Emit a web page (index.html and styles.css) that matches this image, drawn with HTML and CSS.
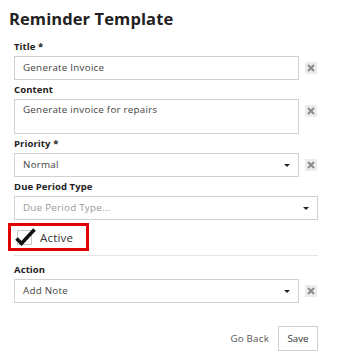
FILE: index.html
```html
<!DOCTYPE html>
<html lang="en">

<head>
  <meta charset="UTF-8" />
  <title>Reminder Template</title>
  <link rel="stylesheet" href="styles.css">
</head>

<body>
  <main class="panel">
    <h1 class="panel-title">Reminder Template</h1>

    <!-- 제목 -->
    <div class="field">
      <label class="field-label">Title *</label>
      <div class="field-row">
        <div class="control">Generate Invoice</div>
        <span class="clear">
          <svg width="8" height="8" viewBox="0 0 8 8"><path d="M1 1L7 7M7 1L1 7" /></svg>
        </span>
      </div>
    </div>

    <!-- 내용 -->
    <div class="field">
      <label class="field-label">Content</label>
      <div class="field-row">
        <div class="control control-area">Generate invoice for repairs</div>
        <span class="clear">
          <svg width="8" height="8" viewBox="0 0 8 8"><path d="M1 1L7 7M7 1L1 7" /></svg>
        </span>
      </div>
    </div>

    <!-- 우선순위 -->
    <div class="field">
      <label class="field-label">Priority *</label>
      <div class="field-row">
        <div class="control control-select">Normal<i class="caret"></i></div>
        <span class="clear">
          <svg width="8" height="8" viewBox="0 0 8 8"><path d="M1 1L7 7M7 1L1 7" /></svg>
        </span>
      </div>
    </div>

    <!-- 기간 -->
    <div class="field">
      <label class="field-label">Due Period Type</label>
      <div class="field-row">
        <div class="control control-select placeholder">Due Period Type...<i class="caret"></i></div>
      </div>
    </div>

    <!-- 활성 체크 -->
    <div class="check-line">
      <label class="check">
        <svg class="check-box" width="23" height="20" viewBox="0 0 23 20">
          <rect x="3.5" y="3.5" width="14" height="14" fill="#fff" stroke="#c8c8c8" />
          <path d="M2.5 11.5L7.5 16.5L20.5 2.5" fill="none" stroke="#111" stroke-width="3.6" />
        </svg>
        <span>Active</span>
      </label>
    </div>

    <!-- 액션 -->
    <div class="field">
      <label class="field-label">Action</label>
      <div class="field-row">
        <div class="control control-select">Add Note<i class="caret"></i></div>
        <span class="clear">
          <svg width="8" height="8" viewBox="0 0 8 8"><path d="M1 1L7 7M7 1L1 7" /></svg>
        </span>
      </div>
    </div>

    <!-- 버튼 -->
    <div class="actions">
      <a href="#" class="back">Go Back</a>
      <button type="button" class="save">Save</button>
    </div>
    <div class="next-btn"></div>
  </main>
</body>

</html>
```

FILE: styles.css
```css
/* 초기화 */
html,
body {
  margin: 0;
  padding: 0;
}

body {
  background-color: #fff;
  font-family: "Open Sans", "Liberation Sans", sans-serif;
  color: #444;
}

/* 패널 */
.panel {
  width: 338px;
  height: 358px;
  overflow: hidden;
  padding: 0 20px 0 14px;
  box-sizing: border-box;
}

.panel-title {
  margin: 8px 0 10px -5px;
  font-size: 16.5px;
  line-height: 22px;
  font-weight: 700;
  letter-spacing: 0.1px;
  color: #222;
}

/* 입력 그룹 */
.field {
  margin-bottom: 3px;
}

.field-label {
  display: block;
  margin-bottom: 2px;
  font-size: 9.5px;
  line-height: 14px;
  font-weight: 700;
  letter-spacing: 0.1px;
  color: #222;
}

.field-row {
  display: flex;
  align-items: flex-start;
}

.control {
  position: relative;
  flex: 1;
  height: 24px;
  padding: 0 8px;
  box-sizing: border-box;
  border: 1px solid #d2d2d2;
  font-size: 9.8px;
  letter-spacing: 0.25px;
  line-height: 22px;
  color: #444;
}

.control-area {
  height: 35px;
  line-height: 20px;
  padding-top: 0;
}

.placeholder {
  color: #999;
}

/* 셀렉트 화살표 */
.caret {
  position: absolute;
  top: 10px;
  right: 8px;
  width: 0;
  height: 0;
  border-left: 3px solid transparent;
  border-right: 3px solid transparent;
  border-top: 3px solid #222;
}

/* 지우기 버튼 */
.clear {
  display: flex;
  align-items: center;
  justify-content: center;
  width: 12px;
  height: 12px;
  margin: 6px 1px 0 6px;
  background-color: #ececec;
}

.clear path {
  stroke: #8a8a8a;
  stroke-width: 2;
}

/* 체크박스 */
.check-line {
  margin-top: 1px;
  border-bottom: 1px solid #e6e6e6;
  padding-bottom: 3px;
  margin-bottom: 7px;
}

.check {
  display: inline-flex;
  align-items: center;
  gap: 3px;
  margin-left: -6px;
  height: 28px;
  padding: 0 13px 0 3px;
  box-sizing: border-box;
  border: 3px solid #e00000;
  font-size: 11.5px;
  letter-spacing: 0.2px;
  color: #333;
}

.check-box {
  margin-top: -1px;
}

/* 하단 버튼 */
.actions {
  display: flex;
  justify-content: flex-end;
  align-items: center;
  gap: 9px;
  margin-top: 23px;
}

.back {
  font-size: 9.8px;
  letter-spacing: 0.2px;
  color: #555;
  text-decoration: none;
}

.save {
  width: 40px;
  height: 25px;
  padding: 0;
  background-color: #fff;
  border: 1px solid #cfcfcf;
  font-family: inherit;
  font-size: 9.8px;
  color: #333;
}

.next-btn {
  margin: 7px 0 0 168px;
  height: 10px;
  border-top: 2px solid #cdbdf3;
}
```
